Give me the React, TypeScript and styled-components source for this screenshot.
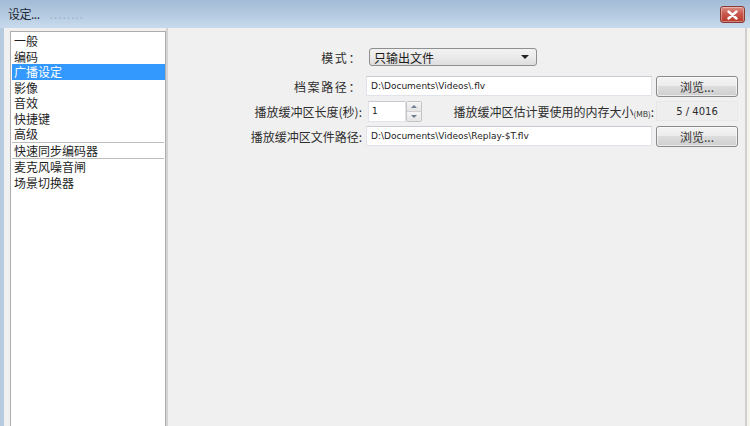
import React, { useState } from 'react'
import styled, { createGlobalStyle } from 'styled-components'

const GlobalStyle = createGlobalStyle`
  html, body {
    margin: 0;
    padding: 0;
    height: 100%;
    overflow: hidden;
  }
  body {
    font-family: "Noto Sans CJK SC", "Noto Sans", sans-serif;
    font-size: 12px;
    color: #1b1b1b;
    background: #f0f0f0;
  }
`

const Window = styled.div`
  width: 750px;
  height: 426px;
  display: flex;
  flex-direction: column;
  background: #f0f0f0;
`

const TitleBar = styled.div`
  height: 28px;
  flex: none;
  display: flex;
  align-items: center;
  justify-content: space-between;
  padding: 0 5px 0 8px;
  background: linear-gradient(#a2bbd6, #b7cce2 60%, #c8d9ec);
  border-bottom: 1px solid #c9d8e8;
  box-sizing: border-box;
`

const Title = styled.span`
  font-size: 12px;
  color: #1e2a36;
  letter-spacing: -0.5px;

  &::after {
    content: '........';
    margin-left: 10px;
    color: #9fb4ca;
    letter-spacing: 1px;
  }
`

const CloseButton = styled.button`
  width: 25px;
  height: 17px;
  padding: 0;
  margin-top: 2px;
  border: 1px solid #8a3a33;
  border-radius: 3px;
  background: linear-gradient(#dc9088, #c9584c 45%, #b73a2c);
  box-shadow: inset 0 0 0 1px rgba(255, 255, 255, 0.35);
  display: flex;
  align-items: center;
  justify-content: center;
`

const Body = styled.div`
  flex: 1;
  display: flex;
  min-height: 0;
  border-left: 4px solid #b7cbe0;
  border-right: 3px solid #f4f4ec;
`

const SideArea = styled.div`
  width: 164px;
  flex: none;
  box-sizing: border-box;
  padding: 3px 0 0 6px;
  display: flex;
  border-right: 2px solid #d4d4d4;
`

const List = styled.ul`
  flex: 1;
  list-style: none;
  margin: 0;
  padding: 1px 0 0 1px;
  background: #fff;
  border: 1px solid #adadad;
  border-bottom: none;
`

const Item = styled.li<{ selected?: boolean; divided?: boolean }>`
  height: 15.5px;
  line-height: 15px;
  padding-left: 2px;
  font-size: 12px;
  white-space: nowrap;
  color: ${p => (p.selected ? '#fff' : '#1e1e1e')};
  background: ${p => (p.selected ? '#3399ff' : 'transparent')};
  ${p =>
    p.divided &&
    `
    border-top: 1px solid #bdbdbd;
    border-bottom: 1px solid #bdbdbd;
    margin-right: 1px;
  `}
`

const Panel = styled.div`
  flex: 1;
  background: #f0f0f0;
  border-right: 2px solid #cfcfcf;
  padding-top: 20px;
`

const Form = styled.div`
  display: grid;
  grid-template-columns: 194px 286px 82px;
  grid-template-rows: 18px 0 20px 20px 20px;
  column-gap: 4px;
  row-gap: 5px;
  align-items: center;
`

const Label = styled.label<{ spaced?: boolean }>`
  text-align: right;
  font-size: 12px;
  color: #2e2e2e;
  white-space: nowrap;
  letter-spacing: ${p => (p.spaced ? '1.6px' : '0')};
`

const Select = styled.div`
  width: 168px;
  height: 18px;
  margin-left: 3px;
  box-sizing: border-box;
  border: 1px solid #8e8f8f;
  border-radius: 3px;
  background: linear-gradient(#f2f2f2, #ebebeb 50%, #dddddd);
  display: flex;
  align-items: center;
  justify-content: space-between;
  padding: 0 7px 0 4px;
  font-size: 12px;
  color: #1b1b1b;
`

const Arrow = styled.span`
  width: 0;
  height: 0;
  border-left: 4px solid transparent;
  border-right: 4px solid transparent;
  border-top: 4px solid #222;
`

const TextField = styled.div`
  height: 20px;
  box-sizing: border-box;
  background: #fff;
  border: 1px solid #e2e3ea;
  border-top-color: #c9cbd2;
  padding: 0 4px;
  display: flex;
  align-items: center;
  font-family: "DejaVu Sans", "Liberation Sans", sans-serif;
  font-size: 9px;
  color: #1b1b1b;
`

const BrowseButton = styled.button`
  height: 21px;
  box-sizing: border-box;
  border: 1px solid #8a8a8a;
  border-radius: 3px;
  background: linear-gradient(#f4f4f4, #ececec 45%, #dcdcdc 50%, #cfcfcf);
  box-shadow: inset 0 0 0 1px rgba(255, 255, 255, 0.6);
  font-family: "Noto Sans CJK SC", sans-serif;
  font-size: 12px;
  color: #333;
  padding: 0;
`

const BufferCell = styled.div`
  display: flex;
  align-items: center;
  justify-content: space-between;
`

const Spin = styled.div`
  display: flex;
  height: 21px;
  margin-left: 2px;
`

const SpinInput = styled(TextField)`
  width: 38px;
  height: 21px;
  padding-left: 3px;
`

const SpinButtons = styled.div`
  width: 14px;
  display: flex;
  flex-direction: column;
  border: 1px solid #c4c4c4;
  border-radius: 2px;
  overflow: hidden;
`

const SpinHalf = styled.div<{ up?: boolean }>`
  flex: 1;
  display: flex;
  align-items: center;
  justify-content: center;
  background: linear-gradient(#f6f6f6, #e4e4e4);
  border-top: ${p => (p.up ? 'none' : '1px solid #cfcfcf')};

  &::before {
    content: '';
    width: 0;
    height: 0;
    border-left: 3px solid transparent;
    border-right: 3px solid transparent;
    ${p => (p.up ? 'border-bottom: 3px solid #6f7f92;' : 'border-top: 3px solid #6f7f92;')}
  }
`

const MemoryLabel = styled(Label)`
  margin-right: -2px;

  small {
    font-size: 8px;
  }
`

const MemoryValue = styled.div`
  height: 20px;
  box-sizing: border-box;
  border: 1px solid #e8e8e8;
  background: #eeeeee;
  display: flex;
  align-items: center;
  justify-content: center;
  font-family: "DejaVu Sans", "Liberation Sans", sans-serif;
  font-size: 10px;
  color: #2b2b2b;
`

const RowBreak = styled.div`
  grid-column: 1 / -1;
`

const sections = ['一般', '编码', '广播设定', '影像', '音效', '快捷键', '高级', '快速同步编码器', '麦克风噪音闸', '场景切换器']

const App: React.FC = () => {
  const [active, setActive] = useState('广播设定')

  return (
    <>
      <GlobalStyle />
      <Window>
        <TitleBar>
          <Title>设定...</Title>
          <CloseButton aria-label='关闭'>
            <svg width='11' height='10' viewBox='0 0 11 10'>
              <path d='M1.5 1.5 L9.5 8.5 M9.5 1.5 L1.5 8.5' stroke='#fff' strokeWidth='2.4' strokeLinecap='round' />
            </svg>
          </CloseButton>
        </TitleBar>
        <Body>
          <SideArea>
            <List>
              {sections.map(name => (
                <Item
                  key={name}
                  selected={name === active}
                  divided={name === '快速同步编码器'}
                  onClick={() => setActive(name)}
                >
                  {name}
                </Item>
              ))}
            </List>
          </SideArea>
          <Panel>
            <Form>
              <Label spaced>模式：</Label>
              <div>
                <Select>
                  只输出文件
                  <Arrow />
                </Select>
              </div>
              <div />
              <RowBreak />

              <Label spaced>档案路径：</Label>
              <TextField>D:\Documents\Videos\.flv</TextField>
              <BrowseButton>浏览...</BrowseButton>

              <Label>播放缓冲区长度(秒):</Label>
              <BufferCell>
                <Spin>
                  <SpinInput>1</SpinInput>
                  <SpinButtons>
                    <SpinHalf up />
                    <SpinHalf />
                  </SpinButtons>
                </Spin>
                <MemoryLabel>
                  播放缓冲区估计要使用的内存大小<small>(MB)</small>:
                </MemoryLabel>
              </BufferCell>
              <MemoryValue>5 / 4016</MemoryValue>

              <Label>播放缓冲区文件路径:</Label>
              <TextField>D:\Documents\Videos\Replay-$T.flv</TextField>
              <BrowseButton>浏览...</BrowseButton>
            </Form>
          </Panel>
        </Body>
      </Window>
    </>
  )
}

export default App
